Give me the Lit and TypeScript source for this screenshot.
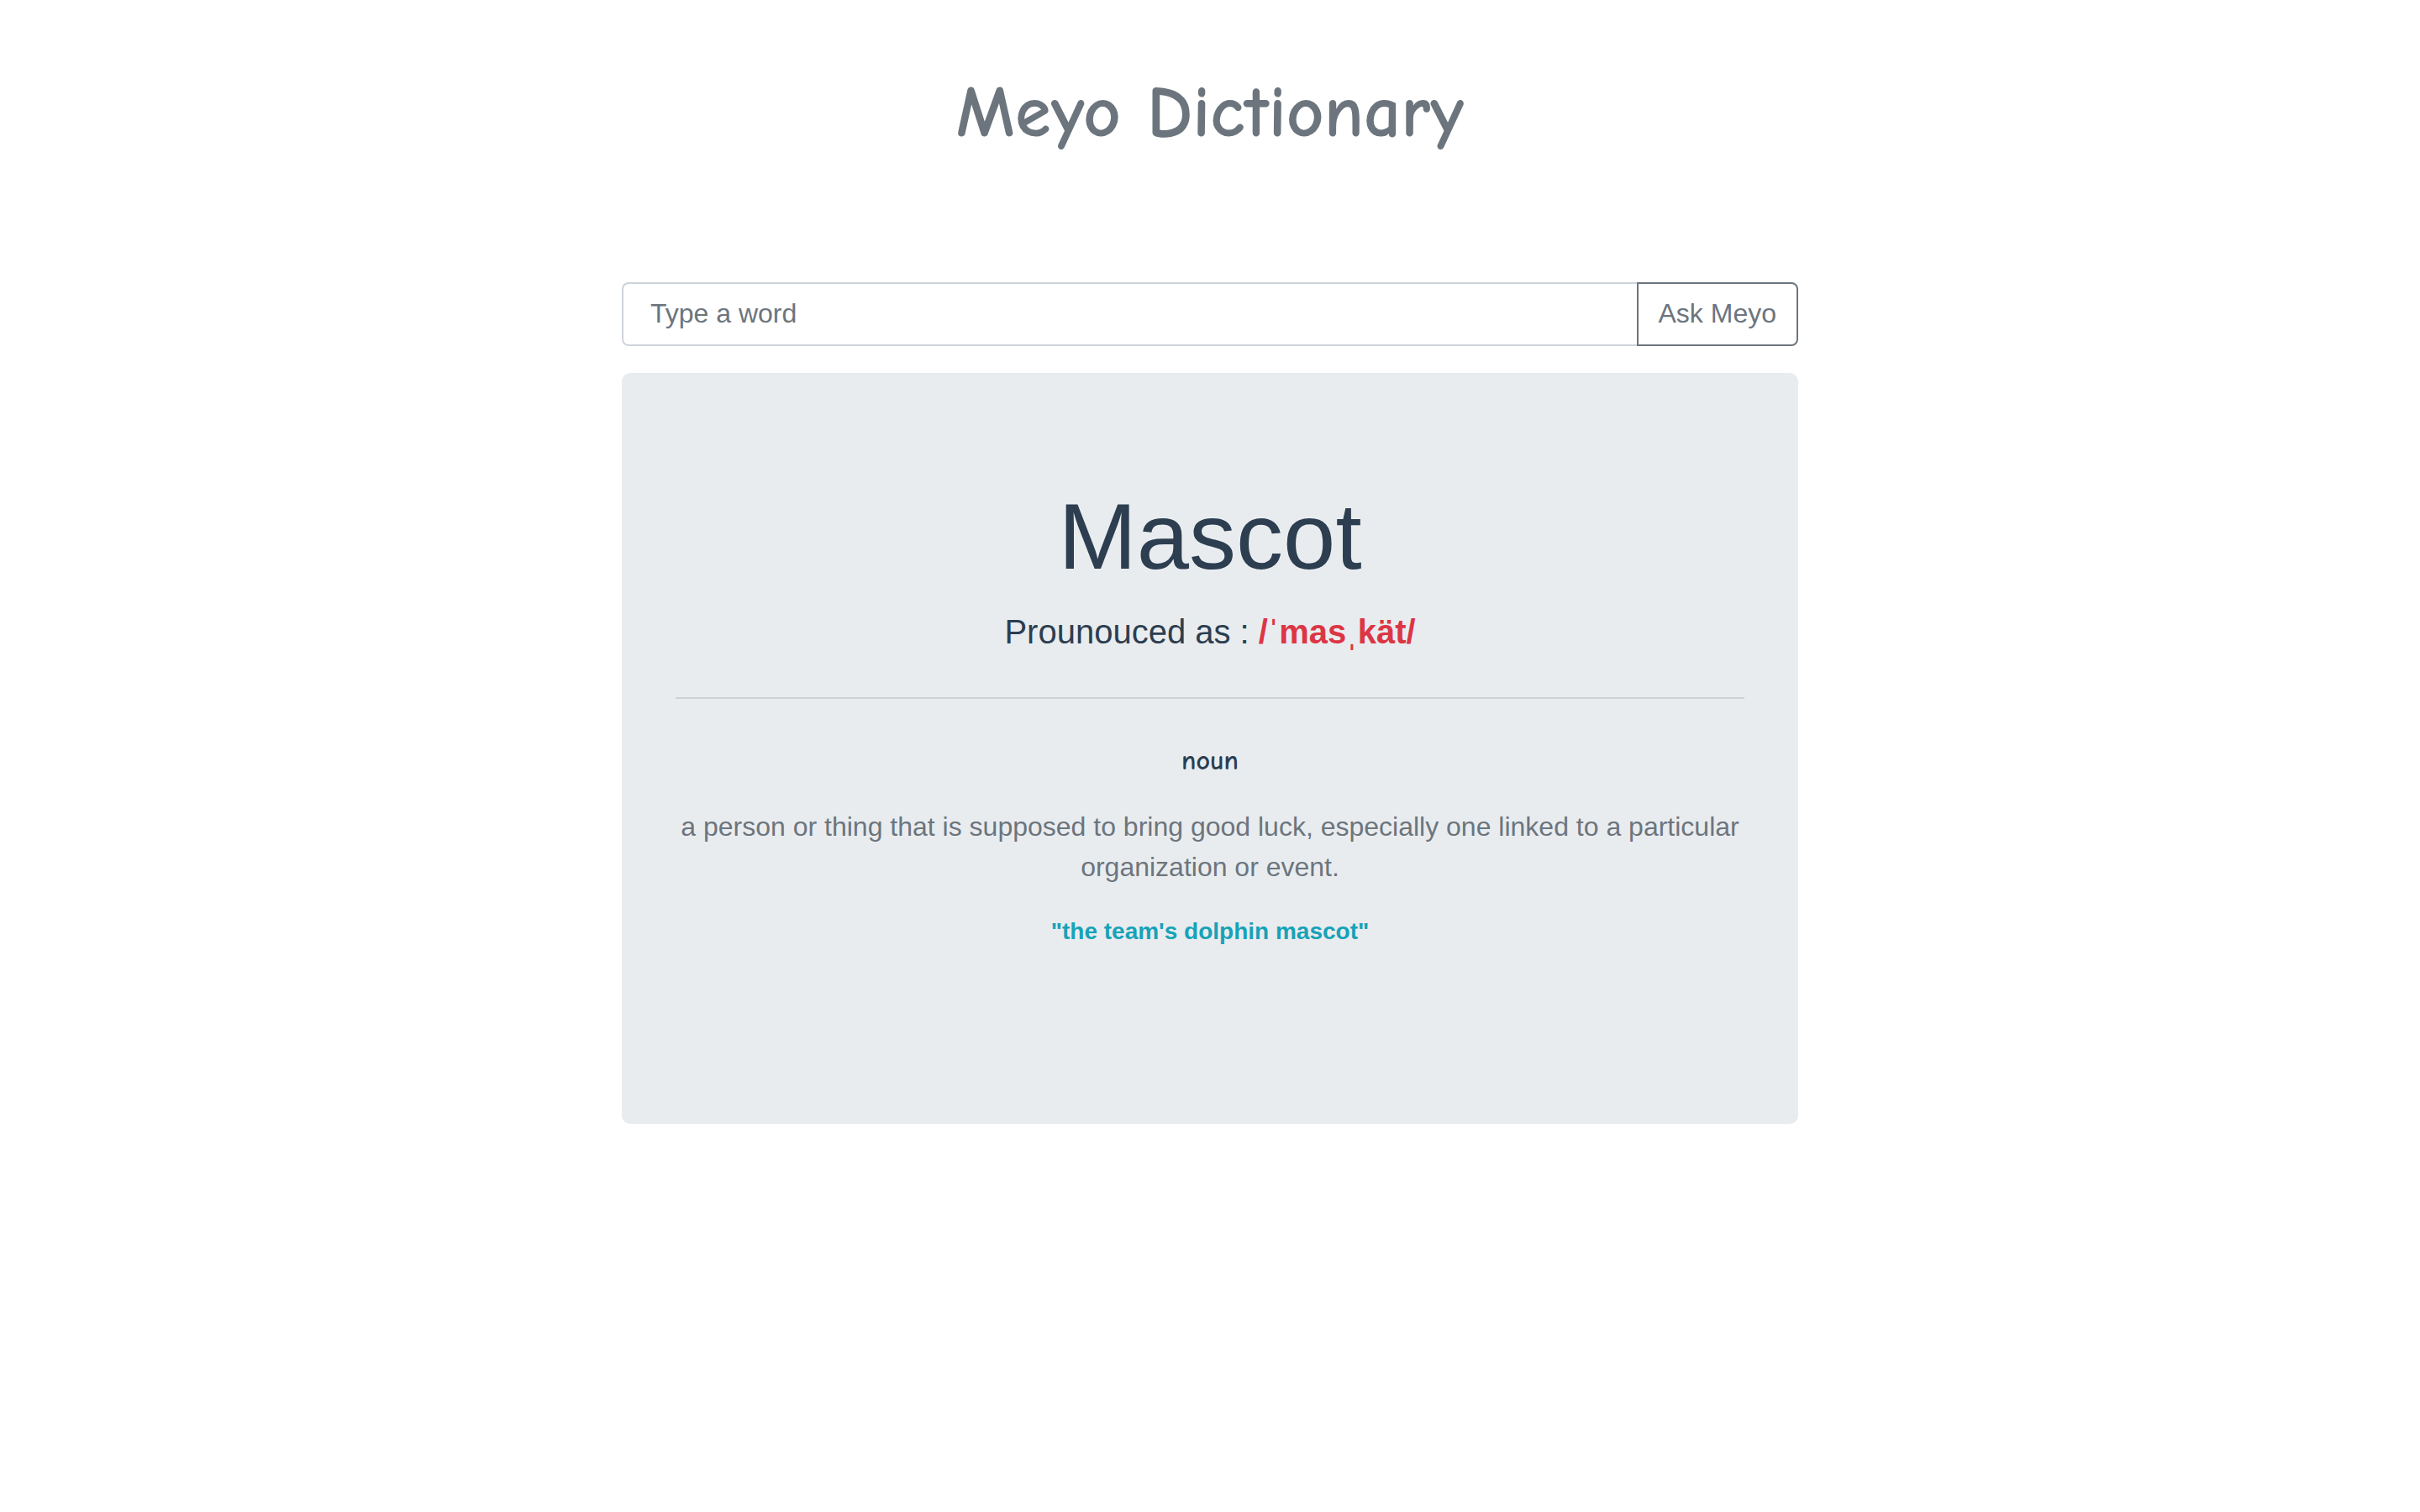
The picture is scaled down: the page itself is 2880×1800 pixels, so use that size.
import { LitElement, html, css } from "lit";
import { customElement } from "lit/decorators.js";

@customElement("app-root")
class AppRoot extends LitElement {
  static styles = css`
    :host {
      display: block;
      font-family: "Liberation Sans", Arial, sans-serif;
      font-size: 32px;
      line-height: 48px;
      color: #2c3e50;
      text-align: center;
    }
    *, *::before, *::after { box-sizing: border-box; }
    .page { max-width: 1400px; margin: 0 auto; padding-top: 78px; }
    .title {
      margin: 0;
      font-family: "Comic Sans MS", "Comic Neue", cursive;
      font-size: 87px;
      font-weight: 700;
      line-height: 112px;
      color: #6c757d;
    }
    .search { display: flex; margin: 146px 0 32px; }
    .word {
      flex: 1;
      min-width: 0;
      height: 76px;
      padding: 0 32px 2px;
      border: 2px solid #ced4da;
      border-right: 0;
      border-radius: 8px 0 0 8px;
      font: inherit;
      color: #495057;
      background: #fff;
    }
    .word::placeholder { color: #6c757d; opacity: 1; }
    .ask {
      height: 76px;
      padding: 0 24px 2px;
      border: 2px solid #6c757d;
      border-radius: 0 8px 8px 0;
      background: #fff;
      font: inherit;
      color: #6c757d;
    }
    .card { padding: 128px 64px 208px; border-radius: 10px; background: #e9ecef; }
    .entry { margin: 0 0 16px; font-size: 112px; font-weight: 400; line-height: 134px; }
    .sound { margin: 0; font-size: 40px; line-height: 60px; }
    .ipa { color: #dc3545; }
    .rule { margin: 48px 0; border: 0; border-top: 2px solid #cfd2d5; }
    .kind {
      margin: 0 0 28px;
      font-family: "Comic Sans MS", "Comic Neue", cursive;
      font-size: 32px;
      font-weight: 700;
      line-height: 52px;
    }
    .meaning { margin: 0 0 32px; color: #6c757d; }
    .example { margin: 0; font-size: 28px; font-weight: 700; line-height: 42px; color: #17a2b8; }
  `;

  render() {
    return html`
      <main class="page">
        <h1 class="title">Meyo Dictionary</h1>
        <form class="search" @submit=${(e: Event) => e.preventDefault()}>
          <input class="word" type="text" aria-label="Type a word" placeholder="Type a word" />
          <button class="ask" type="submit">Ask Meyo</button>
        </form>
        <article class="card">
          <h2 class="entry">Mascot</h2>
          <p class="sound">Prounouced as : <b class="ipa">/ˈmasˌkät/</b></p>
          <hr class="rule" />
          <p class="kind">noun</p>
          <p class="meaning">a person or thing that is supposed to bring good luck, especially one linked to a particular organization or event.</p>
          <p class="example">"the team's dolphin mascot"</p>
        </article>
      </main>
    `;
  }
}
